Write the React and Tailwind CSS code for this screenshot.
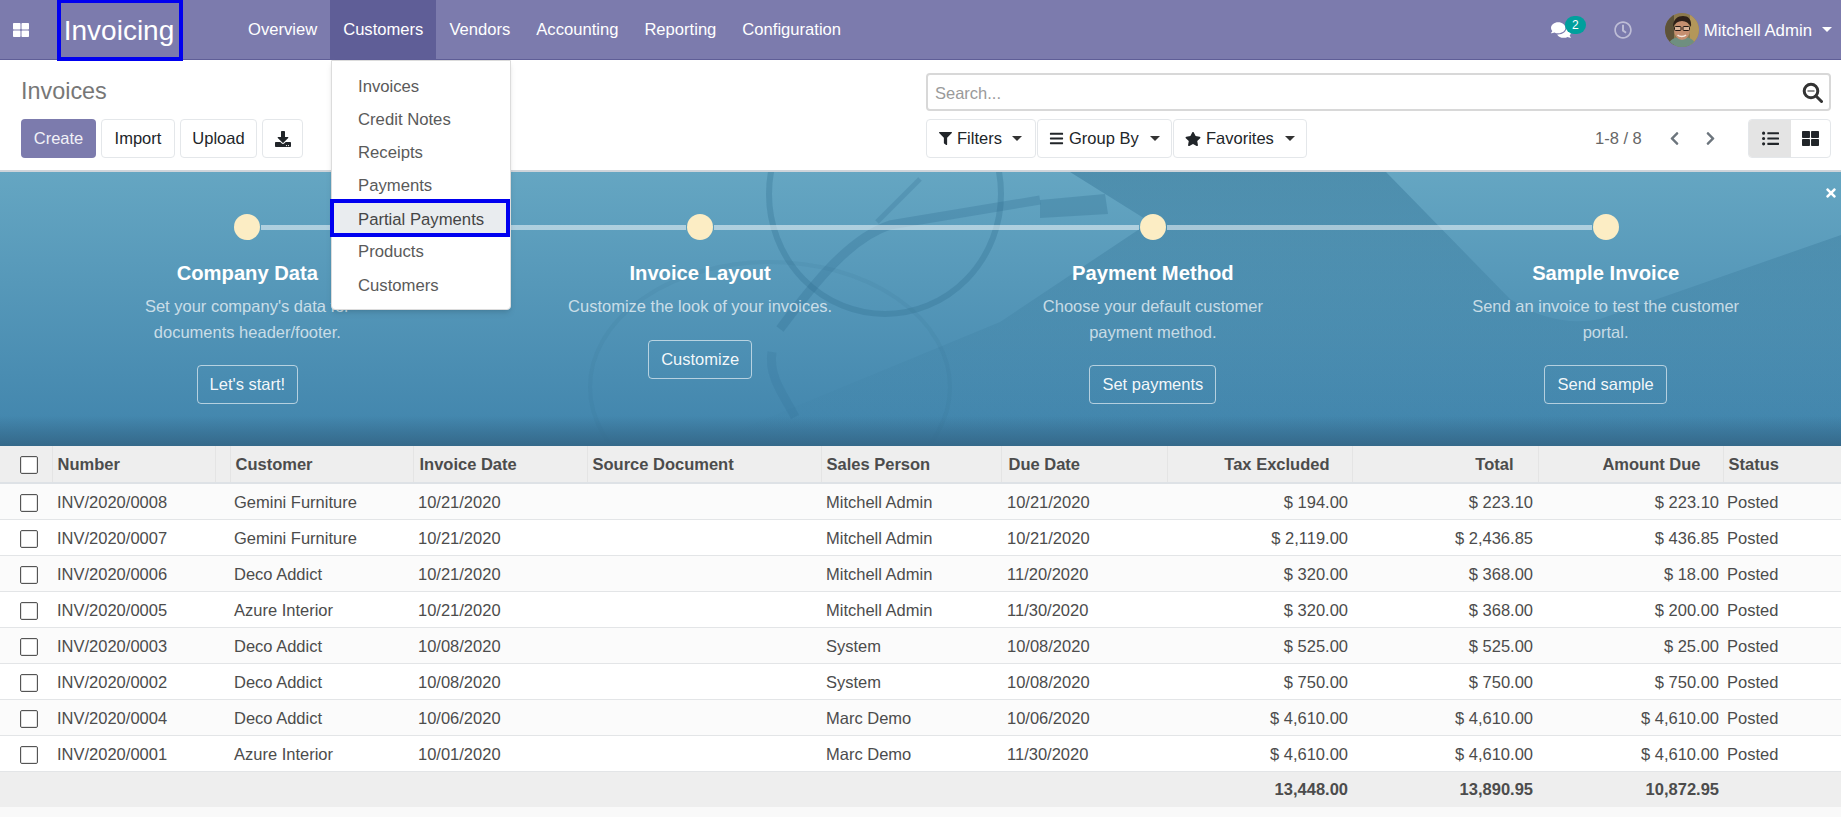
import {
  FaComments,
  FaRegClock,
  FaFilter,
  FaBars,
  FaStar,
  FaChevronLeft,
  FaChevronRight,
  FaListUl,
  FaThLarge,
  FaDownload,
  FaTimes,
} from "react-icons/fa";

const navItems = ["Overview", "Customers", "Vendors", "Accounting", "Reporting", "Configuration"];
const menuItems = ["Invoices", "Credit Notes", "Receipts", "Payments", "Partial Payments", "Products", "Customers"];

const steps = [
  { title: "Company Data", text: "Set your company's data for documents header/footer.", button: "Let's start!" },
  { title: "Invoice Layout", text: "Customize the look of your invoices.", button: "Customize" },
  { title: "Payment Method", text: "Choose your default customer payment method.", button: "Set payments" },
  { title: "Sample Invoice", text: "Send an invoice to test the customer portal.", button: "Send sample" },
];

const invoices = [
  ["INV/2020/0008", "Gemini Furniture", "10/21/2020", "Mitchell Admin", "10/21/2020", "$ 194.00", "$ 223.10", "$ 223.10"],
  ["INV/2020/0007", "Gemini Furniture", "10/21/2020", "Mitchell Admin", "10/21/2020", "$ 2,119.00", "$ 2,436.85", "$ 436.85"],
  ["INV/2020/0006", "Deco Addict", "10/21/2020", "Mitchell Admin", "11/20/2020", "$ 320.00", "$ 368.00", "$ 18.00"],
  ["INV/2020/0005", "Azure Interior", "10/21/2020", "Mitchell Admin", "11/30/2020", "$ 320.00", "$ 368.00", "$ 200.00"],
  ["INV/2020/0003", "Deco Addict", "10/08/2020", "System", "10/08/2020", "$ 525.00", "$ 525.00", "$ 25.00"],
  ["INV/2020/0002", "Deco Addict", "10/08/2020", "System", "10/08/2020", "$ 750.00", "$ 750.00", "$ 750.00"],
  ["INV/2020/0004", "Deco Addict", "10/06/2020", "Marc Demo", "10/06/2020", "$ 4,610.00", "$ 4,610.00", "$ 4,610.00"],
  ["INV/2020/0001", "Azure Interior", "10/01/2020", "Marc Demo", "11/30/2020", "$ 4,610.00", "$ 4,610.00", "$ 4,610.00"],
];

function Caret({ className }) {
  return <span className={`inline-block w-0 h-0 border-x-[5px] border-x-transparent border-t-[5px] ${className}`} />;
}

function Checkbox() {
  return <span className="block w-[18px] h-[18px] ml-[20px] bg-white border border-[#555] rounded-[2px] shadow-[inset_0_0_0_1px_#e4e4e4]" />;
}

function Avatar() {
  return (
    <svg width="34" height="34" viewBox="0 0 34 34" className="rounded-full">
      <rect width="34" height="34" fill="#8d7a4e" />
      <rect x="0" y="0" width="9" height="34" fill="#5d5238" />
      <rect x="25" y="0" width="9" height="34" fill="#b3975a" />
      <path d="M3 34c1-8 7-10 14-10s13 2 14 10z" fill="#6f8f80" />
      <ellipse cx="17" cy="17" rx="8" ry="10" fill="#c58f70" />
      <path d="M8 14c0-8 5-11 10-11s9 3 8 11c-2-4-5-6-9-6s-7 2-9 6z" fill="#2e2019" />
      <rect x="9.5" y="13.5" width="6.5" height="4" rx="1" fill="#d9b49a" stroke="#241a15" strokeWidth="1" />
      <rect x="18" y="13.5" width="6.5" height="4" rx="1" fill="#d9b49a" stroke="#241a15" strokeWidth="1" />
      <path d="M12.5 22c2 2 6.5 2 8.5 0" stroke="#f3e6dc" strokeWidth="1.6" fill="none" />
    </svg>
  );
}

function SearchIcon() {
  return (
    <svg width="21" height="21" viewBox="0 0 21 21">
      <circle cx="9" cy="9" r="6.8" fill="none" stroke="#333" strokeWidth="3" />
      <line x1="14" y1="14" x2="19.5" y2="19.5" stroke="#333" strokeWidth="3" strokeLinecap="round" />
      <line x1="5.5" y1="9" x2="12.5" y2="9" stroke="#777" strokeWidth="1.6" />
    </svg>
  );
}

// faint photo behind the onboarding steps (sheet of paper, glasses, pen)
function BannerPhoto() {
  return (
    <svg className="absolute inset-0 w-full h-full" viewBox="0 0 1841 274" preserveAspectRatio="none">
      <defs>
        <linearGradient id="shade" x1="0" y1="0" x2="0" y2="1">
          <stop offset="0" stopColor="#2f6f92" stopOpacity="0.42" />
          <stop offset="0.75" stopColor="#2f6f92" stopOpacity="0.08" />
          <stop offset="1" stopColor="#2f6f92" stopOpacity="0" />
        </linearGradient>
      </defs>
      <path d="M1070 0L1150 50L1000 150L700 274L1841 274L1841 63L1600 147C1560 155 1530 140 1510 127L1386 0Z" fill="url(#shade)" />
      <ellipse cx="885" cy="22" rx="116" ry="120" fill="none" stroke="#2f6c8e" strokeOpacity="0.3" strokeWidth="6" />
      <ellipse cx="770" cy="215" rx="180" ry="125" fill="none" stroke="#2f6c8e" strokeOpacity="0.1" strokeWidth="4" />
      <path d="M1040 28L890 53C850 66 815 110 780 157" fill="none" stroke="#2f6c8e" strokeOpacity="0.28" strokeWidth="9" />
      <path d="M920 7L877 50" fill="none" stroke="#2f6c8e" strokeOpacity="0.25" strokeWidth="5" />
      <path d="M1040 28L1105 22L1108 42L1040 46Z" fill="#2f6c8e" fillOpacity="0.3" />
      <path d="M772 180C768 205 785 225 795 245" fill="none" stroke="#2f6c8e" strokeOpacity="0.18" strokeWidth="9" />
    </svg>
  );
}

export default function App() {
  return (
    <div className="relative min-h-screen bg-[#f9f9f9] font-['Liberation_Sans',Arial,sans-serif] text-[16.5px] text-[#4c4c4c]">
      {/* navbar */}
      <header className="flex items-stretch h-[60px] bg-[#7c7bad] border-b border-[#5f5e97] text-white">
        <div className="flex items-center w-[57px] pl-[13px]">
          <FaThLarge className="text-[16px]" />
        </div>
        <div className="flex items-center justify-center w-[126px] h-[61px] pr-[2px] pt-[1px] border-[4px] border-t-[3px] border-[#0000f0] text-[28px] relative z-10">
          Invoicing
        </div>
        <nav className="flex ml-[52px] text-[16.6px]">
          {navItems.map((item) => (
            <a key={item} className={`flex items-center px-[13px] pt-[2px] ${item === "Customers" ? "bg-[#5f5e97]" : ""}`}>
              {item}
            </a>
          ))}
        </nav>
        <div className="flex items-center ml-auto pr-[9px]">
          <span className="relative mr-[43px]">
            <FaComments className="text-[20px]" />
            <span className="absolute -top-[4px] left-[14px] flex items-center justify-center w-[21px] h-[18px] rounded-full bg-[#00a09d] text-[12px]">
              2
            </span>
          </span>
          <FaRegClock className="text-[18px] text-white/50 mr-[33px]" />
          <Avatar />
          <span className="ml-[5px] pt-[2px] text-[16.8px]">Mitchell Admin</span>
          <Caret className="ml-[10px] border-t-white" />
        </div>
      </header>

      {/* control panel */}
      <section className="flex justify-between h-[112px] bg-white pl-[21px] pr-[10px] border-b-2 border-[#ced4da]">
        <div>
          <h1 className="mt-[17px] text-[23.4px] leading-[28px] text-[#777]">Invoices</h1>
          <div className="flex gap-[5px] mt-[14px]">
            <button className="w-[75px] h-[39px] rounded-[4px] bg-[#7c7bad] text-[#f1f1f7]">Create</button>
            <button className="w-[74px] h-[39px] rounded-[4px] bg-white border border-[#e4e7ea] text-[#212529]">Import</button>
            <button className="w-[77px] h-[39px] rounded-[4px] bg-white border border-[#e4e7ea] text-[#212529]">Upload</button>
            <button className="flex items-center justify-center w-[41px] h-[39px] rounded-[4px] bg-white border border-[#e4e7ea] text-[#212529]">
              <FaDownload className="text-[16px]" />
            </button>
          </div>
        </div>
        <div className="w-[905px]">
          <div className="flex items-center justify-between h-[38px] mt-[13px] pl-[7px] pr-[6px] rounded-[4px] border-2 border-[#d8d8d8]">
            <span className="pt-[3px] text-[#9a9a9a]">Search...</span>
            <SearchIcon />
          </div>
          <div className="flex items-center mt-[8px] whitespace-nowrap text-[#212529]">
            <button className="flex items-center shrink-0 w-[110px] h-[39px] pl-[12px] rounded-[4px] border border-[#e4e7ea]">
              <FaFilter className="text-[13px] mr-[5px]" />
              Filters
              <Caret className="ml-[10px] border-t-[#333]" />
            </button>
            <button className="flex items-center shrink-0 w-[135px] h-[39px] ml-[1px] pl-[11px] rounded-[4px] border border-[#e4e7ea]">
              <FaBars className="text-[15px] mr-[5px]" />
              Group By
              <Caret className="ml-[11px] border-t-[#333]" />
            </button>
            <button className="flex items-center shrink-0 w-[134px] h-[39px] ml-[1px] pl-[11px] rounded-[4px] border border-[#e4e7ea]">
              <FaStar className="text-[16px] mr-[5px]" />
              Favorites
              <Caret className="ml-[11px] border-t-[#333]" />
            </button>
            <span className="ml-[288px] text-[#666]">1-8 / 8</span>
            <FaChevronLeft className="ml-[25px] text-[15px] text-[#6c757d]" />
            <FaChevronRight className="ml-[21px] text-[15px] text-[#6c757d]" />
            <div className="flex ml-auto h-[39px] rounded-[4px] border border-[#e4e7ea] overflow-hidden">
              <span className="flex items-center justify-center w-[42px] bg-[#e4e4e4]">
                <FaListUl className="text-[17px]" />
              </span>
              <span className="flex items-center justify-center w-[39px]">
                <FaThLarge className="text-[17px]" />
              </span>
            </div>
          </div>
        </div>
      </section>

      {/* onboarding banner */}
      <section className="relative h-[274px] pl-[21px] pr-[9px] bg-linear-to-b from-[#65a6c2] to-[#4084ac] overflow-hidden">
        <BannerPhoto />
        <div className="absolute bottom-0 left-0 right-0 h-[30px] bg-linear-to-b from-transparent to-[#35698a]" />
        <FaTimes className="absolute top-[14px] right-[3px] text-[14px] text-white" />
        <div className="relative grid grid-cols-4 pt-[42px]">
          {steps.map((step, i) => (
            <div key={step.title} className="flex flex-col items-center">
              <div className="flex items-center gap-[1px] w-full">
                <span className={`flex-1 h-[5px] ${i === 0 ? "" : "bg-white/50"}`} />
                <span className="w-[26px] h-[26px] rounded-full bg-[#fcedc4]" />
                <span className={`flex-1 h-[5px] ${i === 3 ? "" : "bg-white/50"}`} />
              </div>
              <h2 className="mt-[20px] text-[20.2px] leading-[26px] font-bold text-white">{step.title}</h2>
              <p className="mt-[8px] w-[280px] text-center leading-[25.5px] text-white/70">{step.text}</p>
              <button className="mt-[20px] h-[39px] px-[12px] rounded-[4px] border-[1.5px] border-white/60 text-white/95">
                {step.button}
              </button>
            </div>
          ))}
        </div>
      </section>

      {/* list view */}
      <table className="w-full table-fixed border-collapse">
        <colgroup>
          <col className="w-[52px]" />
          <col className="w-[178px]" />
          <col className="w-[183px]" />
          <col className="w-[174px]" />
          <col className="w-[234px]" />
          <col className="w-[180px]" />
          <col className="w-[166px]" />
          <col className="w-[185px]" />
          <col className="w-[186px]" />
          <col className="w-[185px]" />
          <col />
        </colgroup>
        <thead>
          <tr className="h-[37px] bg-[#eeeeee] border-b-2 border-[#dee2e6] font-bold text-left">
            <th className="p-0 pt-[1px]">
              <Checkbox />
            </th>
            <th className="relative pl-[5px] border-l border-[#e4e4e4]">
              Number
              <span className="absolute top-0 bottom-0 right-[14px] w-px bg-[#e4e4e4]" />
            </th>
            <th className="pl-[5px] border-l border-[#e4e4e4]">Customer</th>
            <th className="pl-[6px] border-l border-[#e4e4e4]">Invoice Date</th>
            <th className="pl-[5px] border-l border-[#e4e4e4]">Source Document</th>
            <th className="pl-[5px] border-l border-[#e4e4e4]">Sales Person</th>
            <th className="pl-[7px] border-l border-[#e4e4e4]">Due Date</th>
            <th className="pr-[22px] text-right border-l border-[#e4e4e4]">Tax Excluded</th>
            <th className="pr-[24px] text-right border-l border-[#e4e4e4]">Total</th>
            <th className="pr-[22px] text-right border-l border-[#e4e4e4]">Amount Due</th>
            <th className="pl-[5px] border-l border-[#e4e4e4]">Status</th>
          </tr>
        </thead>
        <tbody>
          {invoices.map((row, i) => (
            <tr key={row[0]} className={`h-[36px] border-b border-[#e3e5e7] ${i % 2 === 0 ? "bg-[#fbfbfb]" : "bg-white"}`}>
              <td className="p-0 pt-[3px]">
                <Checkbox />
              </td>
              <td className="pl-[5px] pt-[3px]">{row[0]}</td>
              <td className="pl-[4px] pt-[3px]">{row[1]}</td>
              <td className="pl-[5px] pt-[3px]">{row[2]}</td>
              <td></td>
              <td className="pl-[5px] pt-[3px]">{row[3]}</td>
              <td className="pl-[6px] pt-[3px]">{row[4]}</td>
              <td className="pr-[4px] pt-[3px] text-right">{row[5]}</td>
              <td className="pr-[5px] pt-[3px] text-right">{row[6]}</td>
              <td className="pr-[4px] pt-[3px] text-right">{row[7]}</td>
              <td className="pl-[4px] pt-[3px]">Posted</td>
            </tr>
          ))}
        </tbody>
        <tfoot>
          <tr className="h-[36px] bg-[#eeeeee] font-bold">
            <td colSpan={7}></td>
            <td className="pr-[4px] text-right">13,448.00</td>
            <td className="pr-[5px] text-right">13,890.95</td>
            <td className="pr-[4px] text-right">10,872.95</td>
            <td></td>
          </tr>
        </tfoot>
      </table>

      {/* customers dropdown */}
      <div className="absolute top-[60px] left-[331px] w-[180px] h-[250px] pt-[8px] bg-white border border-[#dcdcdc] rounded-b-[4px] shadow-md z-20 text-[16.7px]">
        {menuItems.map((item) => (
          <div
            key={item}
            className={
              item === "Partial Payments"
                ? "flex items-center h-[38px] -my-[2.5px] -ml-[2px] pl-[24px] pt-[2px] w-[180px] bg-[#e9ecef] border-[4px] border-[#0000f0] text-[#454545] relative"
                : "flex items-center h-[33.2px] pl-[26px] pt-[1px] text-[#5a5a5a]"
            }
          >
            {item}
          </div>
        ))}
      </div>
    </div>
  );
}
